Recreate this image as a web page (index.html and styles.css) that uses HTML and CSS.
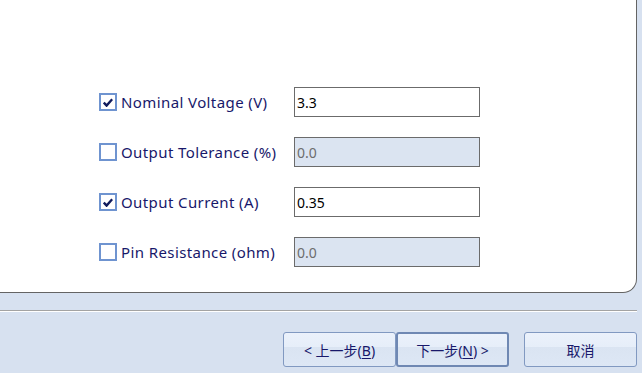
FILE: index.html
```html
<!DOCTYPE html>
<html>
<head>
<meta charset="utf-8">
<link rel="stylesheet" href="styles.css">
</head>
<body>
<div class="panel">
  <div class="row">
    <span class="cb checked"><svg viewBox="0 0 10 9" width="10" height="9"><path d="M0.8 4.6 L3.6 7.6 L9.2 1.2" fill="none" stroke="#101a5c" stroke-width="2.4"/></svg></span>
    <span class="label">Nominal Voltage (V)</span>
    <span class="field">3.3</span>
  </div>
  <div class="row">
    <span class="cb"></span>
    <span class="label">Output Tolerance (%)</span>
    <span class="field disabled">0.0</span>
  </div>
  <div class="row">
    <span class="cb checked"><svg viewBox="0 0 10 9" width="10" height="9"><path d="M0.8 4.6 L3.6 7.6 L9.2 1.2" fill="none" stroke="#101a5c" stroke-width="2.4"/></svg></span>
    <span class="label">Output Current (A)</span>
    <span class="field">0.35</span>
  </div>
  <div class="row">
    <span class="cb"></span>
    <span class="label">Pin Resistance (ohm)</span>
    <span class="field disabled">0.0</span>
  </div>
</div>
<div class="sep"></div>
<div class="buttons">
  <button class="btn">&lt; 上一步(<u>B</u>)</button>
  <button class="btn default">下一步(<u>N</u>) &gt;</button>
  <button class="btn cancel">取消</button>
</div>
</body>
</html>
```
FILE: styles.css
```css
html, body {
  margin: 0;
  padding: 0;
}
body {
  width: 642px;
  height: 373px;
  overflow: hidden;
  background: #d7e1f0;
  font-family: "Noto Sans", "Noto Sans CJK SC", sans-serif;
  color: #18186a;
}
.panel {
  box-sizing: border-box;
  width: 637px;
  height: 293px;
  background: #fff;
  border-right: 1px solid #646464;
  border-bottom: 1px solid #646464;
  border-bottom-right-radius: 14px;
  padding: 87px 0 0 99px;
}
.row {
  display: grid;
  grid-template-columns: 18px 177px 186px;
  align-items: center;
  height: 30px;
  margin-bottom: 20px;
}
.cb {
  box-sizing: border-box;
  width: 18px;
  height: 18px;
  border: 2px solid #6f94d0;
  background: #fff;
  display: flex;
  align-items: center;
  justify-content: center;
}
.cb svg {
  display: block;
}
.label {
  padding-left: 4px;
  font-size: 15px;
  letter-spacing: 0.4px;
  white-space: nowrap;
}
.field {
  box-sizing: border-box;
  height: 30px;
  border: 1px solid #6b6b6b;
  background: #fff;
  font-size: 14px;
  color: #000;
  padding-left: 2px;
  display: flex;
  align-items: center;
}
.field.disabled {
  background: #dbe4f1;
  color: #6d6d6d;
}
.sep {
  width: 637px;
  height: 1px;
  margin-top: 17px;
  background: #a3a3a3;
  border-bottom: 1px solid #fff;
}
.buttons {
  display: flex;
  padding-left: 283px;
  margin-top: 20px;
}
.btn {
  box-sizing: border-box;
  height: 35px;
  width: 113px;
  border: 1px solid #8199c1;
  border-radius: 3px;
  background: linear-gradient(#ebf1fb 0%, #e6eef9 42%, #dae4f2 43%, #dde7f5 100%);
  font-family: "Noto Sans", "Noto Sans CJK SC", sans-serif;
  font-size: 14px;
  color: #18186a;
  padding: 0;
  margin: 0;
}
.btn u {
  text-decoration-thickness: 1px;
  text-underline-offset: 2px;
}
.btn.default {
  width: 113px;
  border: 2px solid #6f88b3;
}
.btn.cancel {
  margin-left: 15px;
}
```
